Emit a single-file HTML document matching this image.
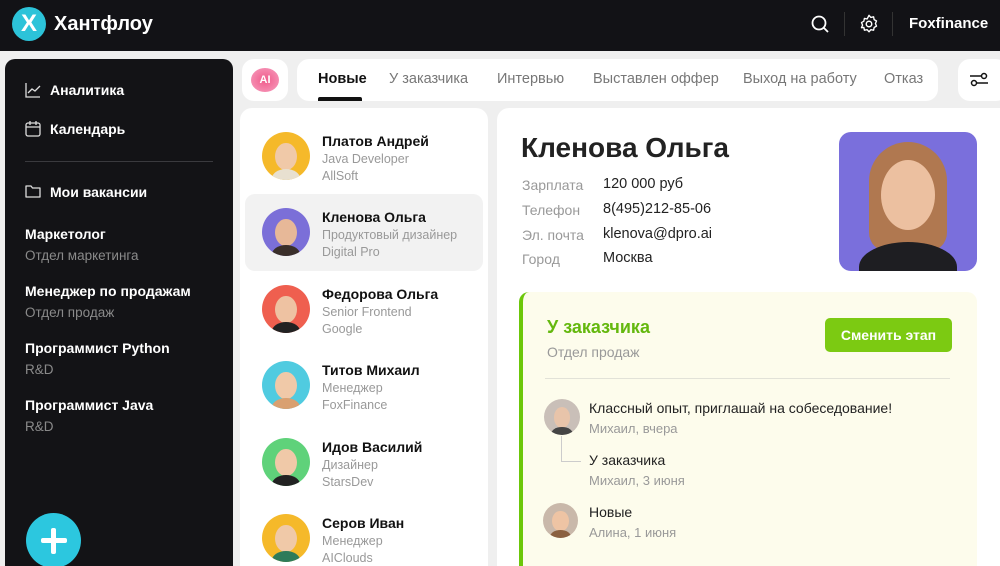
<!DOCTYPE html>
<html style="height:566px;overflow:hidden"><head><meta charset="utf-8"><style>
*{box-sizing:border-box;margin:0;padding:0}
body{width:1000px;height:566px;overflow:hidden;background:#efefef;font-family:"Liberation Sans",sans-serif;position:relative}
.a{position:absolute}
.hdr{left:0;top:0;width:1000px;height:51px;background:#121216}
.side{left:5px;top:59px;width:228px;height:520px;background:#131316;border-radius:10px;color:#fff}
.w{background:#fff;border-radius:12px}
.tab{position:absolute;top:71px;font-size:14.5px;color:#777;}
.it{position:absolute;left:0;width:248px;height:77px}
.av{position:absolute;left:22px;top:0;width:48px;height:48px;border-radius:50%;overflow:hidden}
.nm{position:absolute;left:82px;top:1px;font-size:14px;font-weight:bold;color:#111}
.s1{position:absolute;left:82px;top:20px;font-size:12.5px;color:#999}
.s2{position:absolute;left:82px;top:37px;font-size:12.5px;color:#999}
.lbl{position:absolute;left:522px;font-size:14px;color:#999}
.val{position:absolute;left:603px;font-size:14.5px;color:#222}
.vt{position:absolute;left:26px;font-size:14px;font-weight:bold}
.vs{position:absolute;left:26px;font-size:13.5px;color:#8a8a8a}
.face{position:absolute;left:50%;top:22%;width:46%;height:58%;margin-left:-23%;border-radius:50%;background:#f0c9a8}
.body{position:absolute;left:20%;top:78%;width:60%;height:40%;border-radius:50% 50% 0 0;background:#555}
</style></head><body>
<div class="a hdr"></div>
<div class="a" style="left:12px;top:7px;width:34px;height:34px;border-radius:50%;background:#2cc3d9;color:#fff;font-size:24px;font-weight:bold;text-align:center;line-height:34px">X</div>
<div class="a" style="left:54px;top:13px;color:#fff;font-size:20px;font-weight:bold">Хантфлоу</div>
<svg class="a" style="left:810px;top:14px" width="20" height="20" viewBox="0 0 20 20"><circle cx="9" cy="9" r="6.5" fill="none" stroke="#fff" stroke-width="1.8"/><path d="M14 14l4 4" stroke="#fff" stroke-width="1.8"/></svg>
<div class="a" style="left:844px;top:12px;width:1px;height:24px;background:#333"></div>
<svg class="a" style="left:858px;top:13px" width="22" height="22" viewBox="0 0 24 24"><circle cx="12" cy="12" r="3" fill="none" stroke="#fff" stroke-width="1.6"/><path d="M12 2.5l2 2.3 3-.6.6 3 2.6 1.5-1.2 2.8 1.2 2.8-2.6 1.5-.6 3-3-.6-2 2.3-2-2.3-3 .6-.6-3L3.8 16l1.2-2.8L3.8 10.4l2.6-1.5.6-3 3 .6z" fill="none" stroke="#fff" stroke-width="1.5" stroke-linejoin="round"/></svg>
<div class="a" style="left:892px;top:12px;width:1px;height:24px;background:#333"></div>
<div class="a" style="left:909px;top:15px;color:#fff;font-size:15px;font-weight:bold">Foxfinance</div>

<div class="a side">
<svg class="a" style="left:20px;top:23px" width="16" height="16" viewBox="0 0 16 16"><path d="M1 1v14h14M3 11l4-4 3 2 5-5" fill="none" stroke="#ddd" stroke-width="1.3"/></svg>
<div class="a" style="left:45px;top:23px;font-size:14px;font-weight:bold">Аналитика</div>
<svg class="a" style="left:20px;top:61px" width="16" height="17" viewBox="0 0 16 17"><rect x="1" y="3" width="14" height="13" rx="2" fill="none" stroke="#ddd" stroke-width="1.3"/><path d="M1 7h14M5 1v4M11 1v4" stroke="#ddd" stroke-width="1.3"/></svg>
<div class="a" style="left:45px;top:62px;font-size:14px;font-weight:bold">Календарь</div>
<div class="a" style="left:20px;top:102px;width:188px;height:1px;background:#3a3a3e"></div>
<svg class="a" style="left:20px;top:125px" width="16" height="14" viewBox="0 0 16 14"><path d="M1 2h5l1.5 2H15v9H1z" fill="none" stroke="#ddd" stroke-width="1.3" stroke-linejoin="round"/></svg>
<div class="a" style="left:45px;top:125px;font-size:14px;font-weight:bold">Мои вакансии</div>
<div class="vt" style="left:20px;top:167px">Маркетолог</div><div class="vs" style="left:20px;top:189px">Отдел маркетинга</div>
<div class="vt" style="left:20px;top:224px">Менеджер по продажам</div><div class="vs" style="left:20px;top:246px">Отдел продаж</div>
<div class="vt" style="left:20px;top:281px">Программист Python</div><div class="vs" style="left:20px;top:303px">R&amp;D</div>
<div class="vt" style="left:20px;top:338px">Программист Java</div><div class="vs" style="left:20px;top:360px">R&amp;D</div>
<div class="a" style="left:21px;top:454px;width:55px;height:55px;border-radius:50%;background:#2cc7df"></div>
<div class="a" style="left:36px;top:479px;width:26px;height:5px;background:#fff;border-radius:2px"></div>
<div class="a" style="left:46px;top:469px;width:5px;height:26px;background:#fff;border-radius:2px"></div>
</div>

<div class="a w" style="left:242px;top:59px;width:46px;height:42px"></div>
<div class="a" style="left:251px;top:68px;width:28px;height:24px;border-radius:50%;background:radial-gradient(#f05a8a,#f7a0c0);color:#fff;font-size:11px;font-weight:bold;text-align:center;line-height:24px">AI</div>
<div class="a w" style="left:297px;top:59px;width:641px;height:42px"></div>
<div class="tab" style="left:318px;color:#111;font-weight:bold">Новые</div>
<div class="a" style="left:318px;top:97px;width:44px;height:4px;background:#111;border-radius:2px 2px 0 0"></div>
<div class="tab" style="left:389px">У заказчика</div>
<div class="tab" style="left:497px">Интервью</div>
<div class="tab" style="left:593px">Выставлен оффер</div>
<div class="tab" style="left:743px">Выход на работу</div>
<div class="tab" style="left:884px">Отказ</div>
<div class="a w" style="left:958px;top:59px;width:50px;height:42px"></div>
<svg class="a" style="left:969px;top:71px" width="20" height="18" viewBox="0 0 20 18"><circle cx="15" cy="5" r="2.5" fill="none" stroke="#111" stroke-width="1.5"/><circle cx="5" cy="12" r="2.5" fill="none" stroke="#111" stroke-width="1.5"/><path d="M1 5h11M8 12h11" stroke="#111" stroke-width="1.5"/></svg>

<div class="a w" style="left:240px;top:108px;width:248px;height:470px">
<div class="a" style="left:5px;top:86px;width:238px;height:77px;background:#f2f2f2;border-radius:10px"></div>
<div class="it" style="top:24px"><div class="av" style="background:#f5b92a"><div class="face"></div><div class="body" style="background:#e8e0d0"></div></div><div class="nm">Платов Андрей</div><div class="s1">Java Developer</div><div class="s2">AllSoft</div></div>
<div class="it" style="top:100px"><div class="av" style="background:#7b6fd8"><div class="face" style="background:#e7b898"></div><div class="body" style="background:#3a2f2a"></div></div><div class="nm">Кленова Ольга</div><div class="s1">Продуктовый дизайнер</div><div class="s2">Digital Pro</div></div>
<div class="it" style="top:177px"><div class="av" style="background:#ef5f4f"><div class="face" style="background:#eec2a2"></div><div class="body" style="background:#222"></div></div><div class="nm">Федорова Ольга</div><div class="s1">Senior Frontend</div><div class="s2">Google</div></div>
<div class="it" style="top:253px"><div class="av" style="background:#50cbe0"><div class="face"></div><div class="body" style="background:#d9a070"></div></div><div class="nm">Титов Михаил</div><div class="s1">Менеджер</div><div class="s2">FoxFinance</div></div>
<div class="it" style="top:330px"><div class="av" style="background:#5fd27a"><div class="face"></div><div class="body" style="background:#222"></div></div><div class="nm">Идов Василий</div><div class="s1">Дизайнер</div><div class="s2">StarsDev</div></div>
<div class="it" style="top:406px"><div class="av" style="background:#f5b92a"><div class="face"></div><div class="body" style="background:#2e7b5a"></div></div><div class="nm">Серов Иван</div><div class="s1">Менеджер</div><div class="s2">AIClouds</div></div>
</div>

<div class="a w" style="left:497px;top:108px;width:515px;height:470px"></div>
<div class="a" style="left:521px;top:132px;font-size:28px;font-weight:bold;color:#222">Кленова Ольга</div>
<div class="lbl" style="top:177px">Зарплата</div><div class="val" style="top:176px">120 000 руб</div>
<div class="lbl" style="top:202px">Телефон</div><div class="val" style="top:201px">8(495)212-85-06</div>
<div class="lbl" style="top:227px">Эл. почта</div><div class="val" style="top:226px">klenova@dpro.ai</div>
<div class="lbl" style="top:251px">Город</div><div class="val" style="top:250px">Москва</div>
<div class="a" style="left:839px;top:132px;width:138px;height:139px;border-radius:12px;background:#7a6fdc;overflow:hidden">
<div class="a" style="left:30px;top:10px;width:78px;height:110px;border-radius:40px 40px 20px 20px;background:#b07850"></div>
<div class="a" style="left:42px;top:28px;width:54px;height:70px;border-radius:50%;background:#ecc0a0"></div>
<div class="a" style="left:20px;top:110px;width:98px;height:50px;border-radius:50% 50% 0 0;background:#1e1e22"></div>
</div>

<div class="a" style="left:519px;top:292px;width:458px;height:290px;background:#fdfcec;border-left:4px solid #6cc70a;border-radius:10px"></div>
<div class="a" style="left:547px;top:317px;font-size:18px;font-weight:bold;color:#64b80e">У заказчика</div>
<div class="a" style="left:547px;top:344px;font-size:14px;color:#999">Отдел продаж</div>
<div class="a" style="left:825px;top:318px;width:127px;height:34px;border-radius:5px;background:#7cca12;color:#fff;font-size:14px;font-weight:bold;text-align:center;line-height:34px">Сменить этап</div>
<div class="a" style="left:545px;top:378px;width:405px;height:1px;background:#e2e2d8"></div>
<div class="a" style="left:544px;top:399px;width:36px;height:36px;border-radius:50%;background:#c9bfb8;overflow:hidden"><div class="face" style="background:#e8c4aa"></div><div class="body" style="background:#444"></div></div>
<div class="a" style="left:589px;top:400px;font-size:14px;color:#222">Классный опыт, приглашай на собеседование!</div>
<div class="a" style="left:589px;top:421px;font-size:13px;color:#999">Михаил, вчера</div>
<div class="a" style="left:561px;top:436px;width:20px;height:26px;border-left:1px solid #ccc;border-bottom:1px solid #ccc"></div>
<div class="a" style="left:589px;top:452px;font-size:14px;color:#222">У заказчика</div>
<div class="a" style="left:589px;top:473px;font-size:13px;color:#999">Михаил, 3 июня</div>
<div class="a" style="left:543px;top:503px;width:35px;height:35px;border-radius:50%;background:#c9b8aa;overflow:hidden"><div class="face" style="background:#eec4a4"></div><div class="body" style="background:#8a6040"></div></div>
<div class="a" style="left:589px;top:504px;font-size:14px;color:#222">Новые</div>
<div class="a" style="left:589px;top:525px;font-size:13px;color:#999">Алина, 1 июня</div>
</body></html>
